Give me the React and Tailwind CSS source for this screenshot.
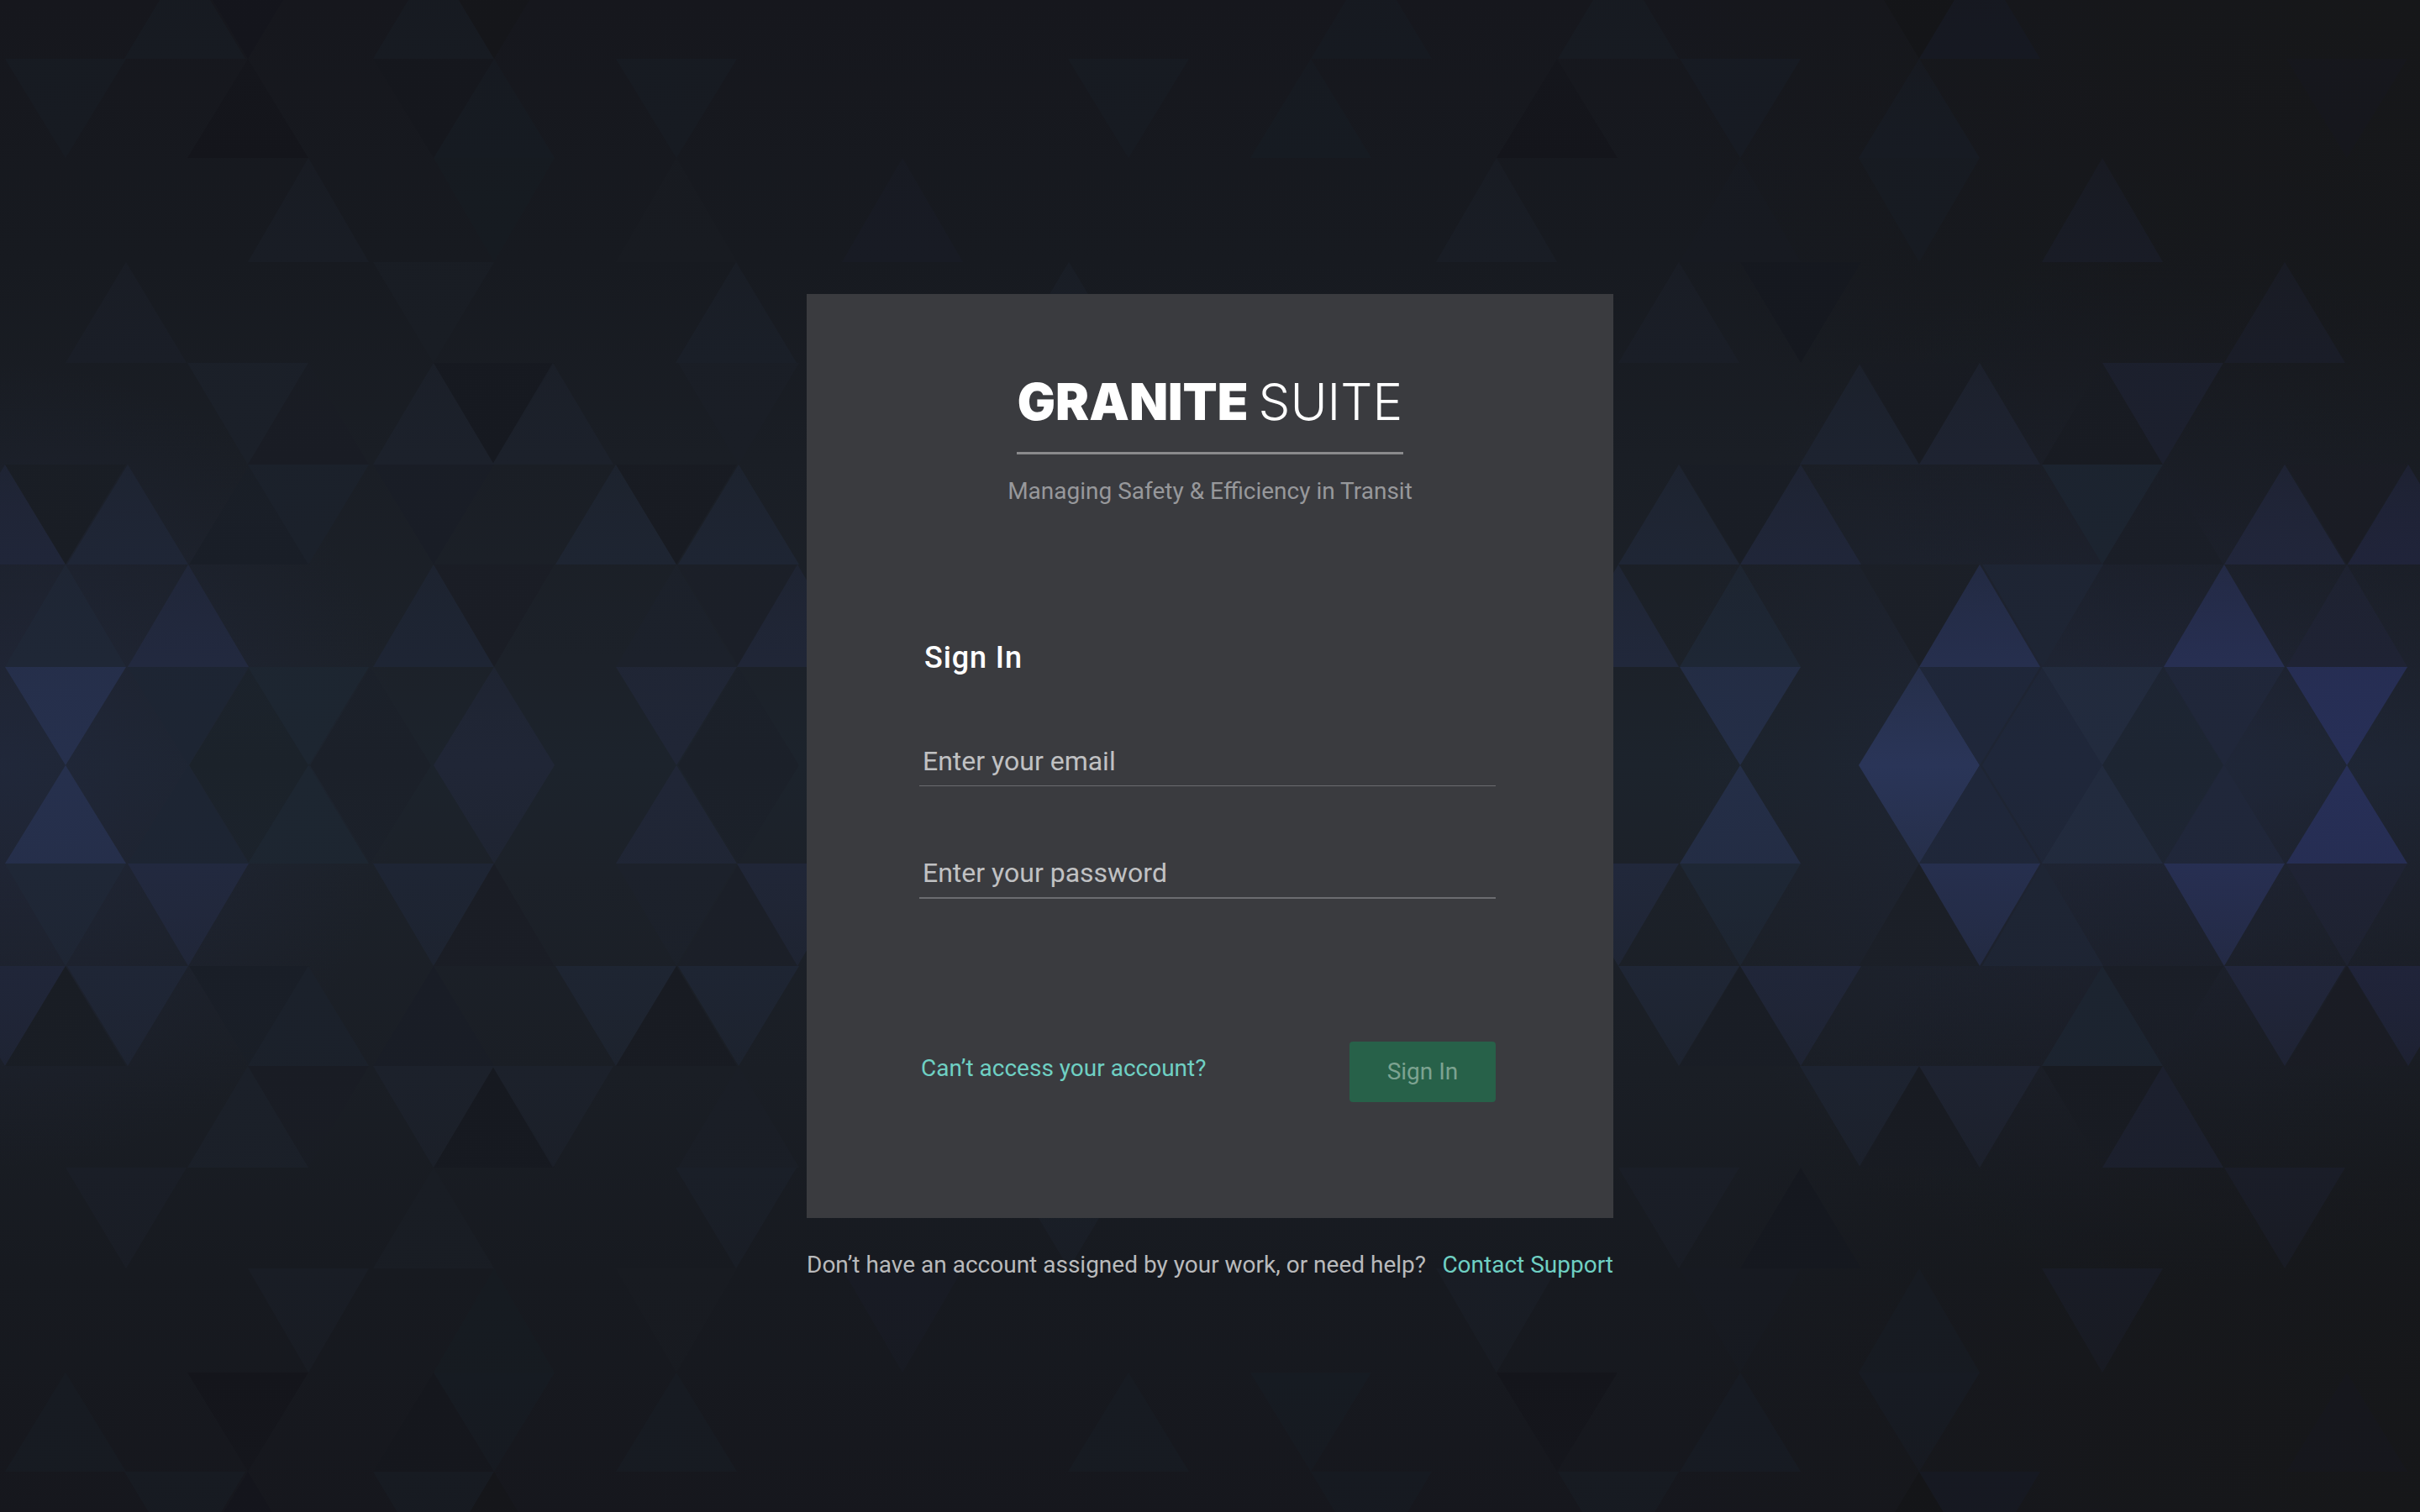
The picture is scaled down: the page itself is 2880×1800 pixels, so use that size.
import React from "react";

const ROWS = [-50, 70, 188, 312, 432, 553, 672, 794, 911];
const HALF = 72;

// [row, direction, apex x, fill]
const FACETS = [
  [0, "up", 220, "#171b22"],
  [0, "up", 516, "#171b22"],
  [0, "down", 295, "#14151c"],
  [0, "down", 588, "#15161a"],
  [0, "up", 1632, "#161a21"],
  [0, "up", 1926, "#171b22"],
  [0, "down", 2284, "#141518"],
  [0, "up", 2356, "#161922"],
  [1, "down", 78, "#171b22"],
  [1, "up", 295, "#14151b"],
  [1, "up", 588, "#161b22"],
  [1, "down", 516, "#15171d"],
  [1, "down", 805, "#171b22"],
  [1, "down", 1343, "#171b22"],
  [1, "up", 1560, "#161b22"],
  [1, "up", 1853, "#14151b"],
  [1, "down", 2071, "#171b23"],
  [1, "up", 2284, "#171b23"],
  [1, "down", 2793, "#16171d"],
  [2, "down", 588, "#161b21"],
  [2, "up", 367, "#191d25"],
  [2, "up", 805, "#181b21"],
  [2, "up", 1074, "#181b24"],
  [2, "up", 1781, "#191d25"],
  [2, "down", 2284, "#171b22"],
  [2, "up", 2071, "#171a21"],
  [2, "up", 2502, "#191c26"],
  [3, "up", 150, "#1a1e27"],
  [3, "down", 516, "#191d24"],
  [3, "up", 876, "#1a1f28"],
  [3, "up", 1272, "#1a1f28"],
  [3, "up", 1998, "#1a1e27"],
  [3, "down", 2143, "#15181f"],
  [3, "up", 2719, "#1a1d28"],
  [4, "down", 295, "#1b2029"],
  [4, "up", 367, "#191c24"],
  [4, "up", 516, "#1c212b"],
  [4, "down", 588, "#161920"],
  [4, "up", 658, "#1c212b"],
  [4, "down", 879, "#1a1e26"],
  [4, "up", 2214, "#1d2330"],
  [4, "down", 2284, "#181b22"],
  [4, "up", 2356, "#1e2331"],
  [4, "up", 2502, "#181b22"],
  [4, "down", 2574, "#1c202e"],
  [5, "up", 6, "#202639"],
  [5, "down", 78, "#191d24"],
  [5, "up", 152, "#1f2636"],
  [5, "up", 297, "#191e27"],
  [5, "down", 367, "#1b212b"],
  [5, "down", 516, "#191d26"],
  [5, "up", 733, "#1e2532"],
  [5, "down", 805, "#181b22"],
  [5, "up", 879, "#1e2533"],
  [5, "up", 1998, "#1f2635"],
  [5, "down", 2071, "#191d25"],
  [5, "up", 2143, "#202639"],
  [5, "down", 2502, "#1c2430"],
  [5, "up", 2574, "#1a1e27"],
  [5, "up", 2719, "#21263b"],
  [5, "down", 2793, "#1a1c24"],
  [5, "up", 2866, "#20243a"],
  [6, "up", 78, "#1f2736"],
  [6, "up", 224, "#22293f"],
  [6, "up", 516, "#1e2534"],
  [6, "down", 588, "#1a1d25"],
  [6, "up", 805, "#1c212b"],
  [6, "down", 879, "#1b1f28"],
  [6, "up", 949, "#202637"],
  [6, "up", 1926, "#21283b"],
  [6, "up", 2071, "#1e2735"],
  [6, "down", 2284, "#1b1f27"],
  [6, "up", 2356, "#262f4e"],
  [6, "down", 2431, "#1e2534"],
  [6, "up", 2647, "#272f52"],
  [6, "up", 2793, "#1f2334"],
  [7, "down", 78, "#26304d"],
  [7, "up", 297, "#1b222a"],
  [7, "down", 367, "#1d2631"],
  [7, "down", 224, "#1d2533"],
  [7, "up", 588, "#202636"],
  [7, "up", 441, "#1b2029"],
  [7, "down", 805, "#202636"],
  [7, "up", 879, "#1b2029"],
  [7, "down", 2071, "#242e47"],
  [7, "up", 2284, "#2a3558"],
  [7, "down", 2356, "#1f273a"],
  [7, "up", 2431, "#1f273a"],
  [7, "down", 2502, "#222b3e"],
  [7, "up", 2574, "#1d2532"],
  [7, "down", 2647, "#20273a"],
  [7, "down", 2793, "#272f57"],
];

function facetPoints([row, direction, x]) {
  const top = ROWS[row];
  const bottom = ROWS[row + 1];
  return direction === "up"
    ? `${x},${top} ${x + HALF},${bottom} ${x - HALF},${bottom}`
    : `${x},${bottom} ${x + HALF},${top} ${x - HALF},${top}`;
}

function Facets() {
  return FACETS.map((facet) => {
    const [row, direction, x, color] = facet;
    const id = `facet-${row}-${direction}-${x}`;
    return (
      <g key={id}>
        <linearGradient id={id} x1="0" y1="0" x2="0" y2="1">
          <stop offset="0" stopColor={color} stopOpacity={direction === "up" ? 0.65 : 0.9} />
          <stop offset="1" stopColor={color} />
        </linearGradient>
        <polygon points={facetPoints(facet)} fill={`url(#${id})`} />
      </g>
    );
  });
}

function Backdrop() {
  return (
    <svg
      className="absolute inset-0 -z-10 h-full w-full"
      viewBox="0 0 2880 1800"
      preserveAspectRatio="xMidYMid slice"
      aria-hidden="true"
    >
      <defs>
        <linearGradient id="night" x1="0" y1="0" x2="0" y2="1822" gradientUnits="userSpaceOnUse">
          <stop offset="0" stopColor="#16171d" />
          <stop offset="0.17" stopColor="#171a20" />
          <stop offset="0.3" stopColor="#1a1e25" />
          <stop offset="0.43" stopColor="#1c2129" />
          <stop offset="0.5" stopColor="#1c232c" />
          <stop offset="0.57" stopColor="#1c2129" />
          <stop offset="0.7" stopColor="#1a1e25" />
          <stop offset="0.83" stopColor="#171a20" />
          <stop offset="1" stopColor="#16171d" />
        </linearGradient>
        <radialGradient id="glowRight" cx="2600" cy="911" r="620" gradientUnits="userSpaceOnUse">
          <stop offset="0" stopColor="#2a3260" stopOpacity="0.24" />
          <stop offset="1" stopColor="#2a3260" stopOpacity="0" />
        </radialGradient>
        <radialGradient id="glowLeft" cx="0" cy="911" r="480" gradientUnits="userSpaceOnUse">
          <stop offset="0" stopColor="#2c3460" stopOpacity="0.26" />
          <stop offset="1" stopColor="#2c3460" stopOpacity="0" />
        </radialGradient>
        <radialGradient id="corner" cx="2880" cy="0" r="900" gradientUnits="userSpaceOnUse">
          <stop offset="0" stopColor="#161719" />
          <stop offset="1" stopColor="#161719" stopOpacity="0" />
        </radialGradient>
        <g id="upper">
          <rect x="2000" width="880" height="911" fill="url(#corner)" />
          <Facets />
        </g>
      </defs>
      <rect width="2880" height="1800" fill="url(#night)" />
      <rect width="2880" height="1800" fill="url(#glowRight)" />
      <rect width="2880" height="1800" fill="url(#glowLeft)" />
      <use href="#upper" />
      <use href="#upper" transform="matrix(1 0 0 -1 0 1822)" />
    </svg>
  );
}

function Field({ type, label, className }) {
  return (
    <input
      type={type}
      aria-label={label}
      placeholder={label}
      className={`block h-16 w-full border-[#6b6c70] bg-transparent px-1 pt-1 text-[32px] text-white outline-none placeholder:text-[#c0c1c3] placeholder:opacity-100 ${className}`}
    />
  );
}

export default function App() {
  return (
    <main className="relative isolate grid min-h-screen grid-cols-[minmax(0,960px)] grid-rows-[1fr_auto_1fr] justify-center overflow-hidden bg-[#16181e] font-['Roboto',sans-serif]">
      <Backdrop />
      <section className="row-start-2 bg-[#3a3b3f] pt-24 pr-[140px] pb-[138px] pl-[134px]">
        <header className="flex flex-col items-center pl-1.5">
          <h1 className="flex items-baseline gap-3 font-['Inter',sans-serif] text-[60px] leading-[64px] text-white">
            <span className="font-black">GRANITE</span>
            <span className="font-light">SUITE</span>
          </h1>
          <div className="mt-7 h-[3px] w-[460px] bg-[#8a8a8c]" />
          <p className="mt-7 text-[28px] leading-8 text-[#97989b]">
            Managing Safety &amp; Efficiency in Transit
          </p>
        </header>
        <form className="mt-[162px]" onSubmit={(event) => event.preventDefault()}>
          <h2 className="px-1.5 text-4xl leading-10 font-medium tracking-wide text-white">
            Sign In
          </h2>
          <Field type="email" label="Enter your email" className="mt-[69px] border-b" />
          <Field type="password" label="Enter your password" className="mt-[70px] border-b-2" />
          <div className="mt-[170px] flex items-start justify-between">
            <a href="#recover" className="px-0.5 pt-4 text-[28px] leading-8 text-[#6fd0c3]">
              Can’t access your account?
            </a>
            <button
              type="submit"
              className="h-[72px] w-[174px] rounded bg-[#276149] text-[28px] text-[#7da391]"
            >
              Sign In
            </button>
          </div>
        </form>
      </section>
      <footer className="row-start-3 mt-10 flex items-start justify-between text-[28px] leading-8">
        <p className="text-[#b9babc]">Don’t have an account assigned by your work, or need help?</p>
        <a href="#support" className="text-[#6fd0c3]">
          Contact Support
        </a>
      </footer>
    </main>
  );
}
